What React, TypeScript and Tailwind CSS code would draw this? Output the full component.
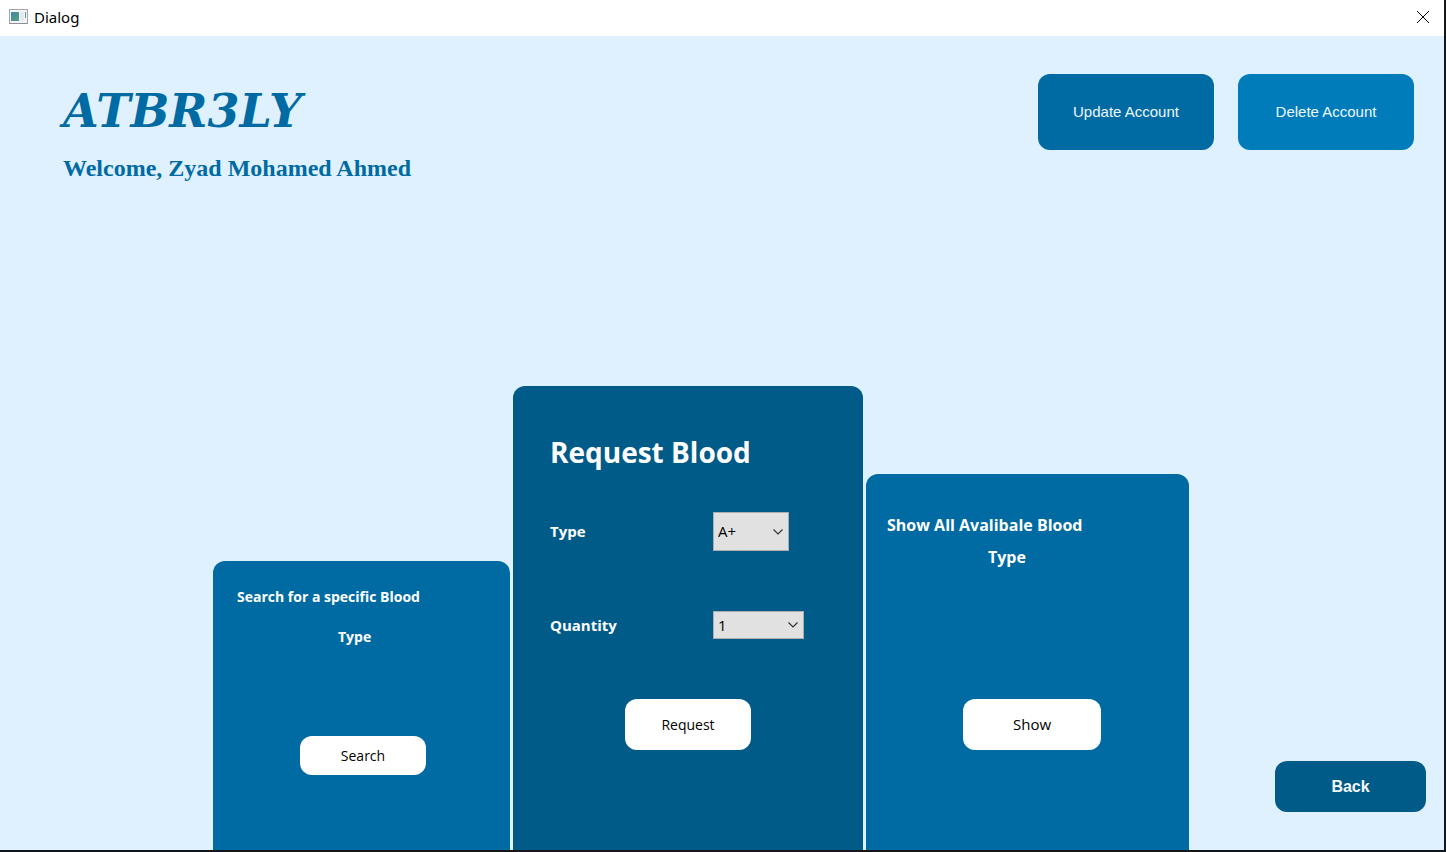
import type { ReactNode, SelectHTMLAttributes } from "react";

const BLOOD_TYPES = ["A+", "A-", "B+", "B-", "AB+", "AB-", "O+", "O-"];
const QUANTITIES = ["1", "2", "3", "4", "5"];

function WindowIcon() {
  return (
    <svg width="20" height="16" viewBox="0 0 20 16" aria-hidden="true">
      <defs>
        <linearGradient id="pane" x1="0" y1="0" x2="1" y2="1">
          <stop offset="0" stopColor="#4a83a8" />
          <stop offset="1" stopColor="#4fa37c" />
        </linearGradient>
      </defs>
      <rect x="0.5" y="0.5" width="18" height="14" fill="#f4f4f6" stroke="#a3a5ab" />
      <rect x="0" y="14" width="19" height="1" fill="#8d8f94" />
      <rect x="2" y="3" width="8" height="9" fill="url(#pane)" />
      <rect x="11" y="3" width="4" height="9" fill="#e6e8ee" />
      <rect x="16" y="3" width="1" height="6" fill="#5a9a9c" />
    </svg>
  );
}

function Dropdown({
  options,
  size,
  ...rest
}: { options: string[]; size: string } & Omit<SelectHTMLAttributes<HTMLSelectElement>, "size">) {
  return (
    <div className={`relative ${size}`}>
      <select
        {...rest}
        className="block h-full w-full appearance-none rounded-none border border-[#adadad] bg-[#e1e1e1] pl-1 pr-6 text-[15px] text-black"
      >
        {options.map((o) => (
          <option key={o}>{o}</option>
        ))}
      </select>
      <svg
        className="pointer-events-none absolute inset-y-0 right-1.5 my-auto"
        width="10"
        height="6"
        viewBox="0 0 10 6"
        fill="none"
        stroke="#333"
        strokeWidth="1.2"
        aria-hidden="true"
      >
        <path d="M0.5 0.5 5 5 9.5 0.5" />
      </svg>
    </div>
  );
}

function Panel({ className, children }: { className: string; children: ReactNode }) {
  return <section className={`flex flex-col rounded-t-xl text-white ${className}`}>{children}</section>;
}

export default function App() {
  return (
    <div className="flex min-h-screen flex-col border-r-2 border-b-2 border-[#14171a] bg-[#dff1ff] font-['Open_Sans','Noto_Sans',sans-serif]">
      <div className="flex h-9 items-center bg-white pr-[15px] pb-0.5 pl-[9px]">
        <WindowIcon />
        <span className="ml-[5px] font-['Noto_Sans',sans-serif] text-[15px] text-black">Dialog</span>
        <button type="button" aria-label="Close" className="ml-auto">
          <svg width="12" height="12" viewBox="0 0 12 12" stroke="#000" aria-hidden="true">
            <path d="M0 0 12 12M12 0 0 12" />
          </svg>
        </button>
      </div>

      <header className="flex items-start justify-between pt-[38px] pr-[30px] pl-[63px] font-['Liberation_Sans',sans-serif]">
        <div className="text-[#006ba2]">
          <h1 className="mt-3 font-['DejaVu_Serif',serif] text-[46px] leading-[50px] font-bold italic">
            ATBR3LY
          </h1>
          <p className="mt-4 font-['Liberation_Serif',serif] text-2xl font-bold">
            Welcome, Zyad Mohamed Ahmed
          </p>
        </div>
        <div className="flex gap-6 text-[15px] text-[#eef6fb]">
          <button type="button" className="h-[76px] w-44 rounded-xl bg-[#006ba2]">
            Update Account
          </button>
          <button type="button" className="h-[76px] w-44 rounded-xl bg-[#007cbb]">
            Delete Account
          </button>
        </div>
      </header>

      <main className="mt-auto flex items-end gap-[3px] pr-[18px] pl-[213px]">
        <Panel className="w-[297px] bg-[#006ba2] pt-4 pb-[75px]">
          <h2 className="pl-6 text-sm leading-10 font-bold">
            Search for a specific Blood
            <span className="block pl-[101px]">Type</span>
          </h2>
          <button
            type="button"
            className="mt-[79px] ml-[87px] h-[39px] w-[126px] rounded-xl bg-white text-sm text-black"
          >
            Search
          </button>
        </Panel>

        <Panel className="w-[350px] bg-[#005b88] pt-[42px] pb-[100px]">
          <h2 className="pl-[37px] text-[28px] leading-[48px] font-bold">Request Blood</h2>
          <div className="mt-9 grid grid-cols-[163px_1fr] items-center gap-y-[60px] pl-[37px] text-[15px] font-bold">
            <label htmlFor="blood-type">Type</label>
            <Dropdown id="blood-type" options={BLOOD_TYPES} size="h-[39px] w-[76px] font-normal" />
            <label htmlFor="quantity">Quantity</label>
            <Dropdown id="quantity" options={QUANTITIES} size="h-7 w-[91px] font-normal" />
          </div>
          <button
            type="button"
            className="mt-[60px] h-[51px] w-[126px] self-center rounded-xl bg-white text-sm text-black"
          >
            Request
          </button>
        </Panel>

        <Panel className="w-[323px] bg-[#006ba2] pt-[35px] pb-[100px]">
          <h2 className="pl-[21px] text-base leading-8 font-bold">
            Show All Avalibale Blood
            <span className="block pl-[101px]">Type</span>
          </h2>
          <button
            type="button"
            className="mt-[126px] ml-[97px] h-[51px] w-[138px] rounded-xl bg-white text-[15px] text-black"
          >
            Show
          </button>
        </Panel>

        <button
          type="button"
          className="mb-[38px] ml-auto h-[51px] w-[151px] rounded-xl bg-[#005b88] font-['Liberation_Sans',sans-serif] text-base font-bold text-[#f4f8fa]"
        >
          Back
        </button>
      </main>
    </div>
  );
}
